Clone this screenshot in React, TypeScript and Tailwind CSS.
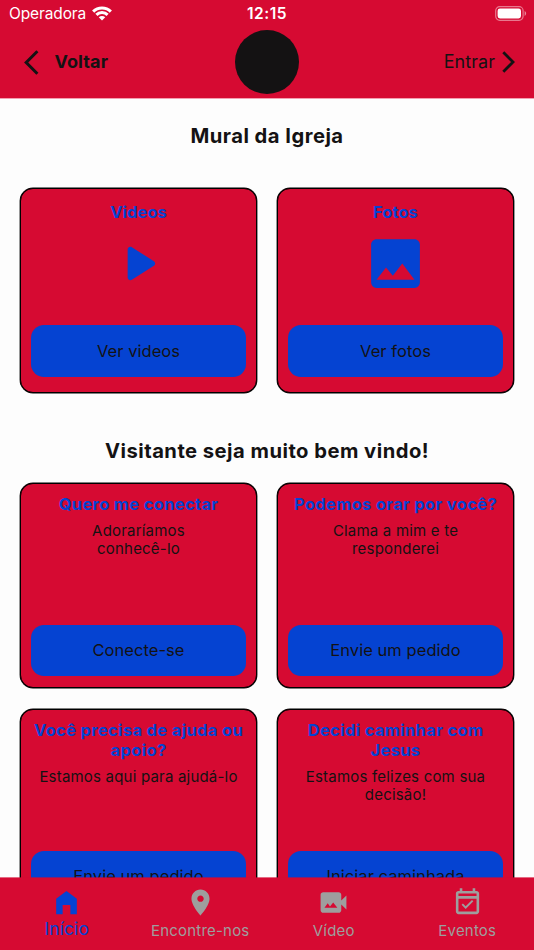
import clsx from "clsx"

interface IconProps {
  d: string
  className?: string
}

interface Card {
  title: string[]
  text?: string[]
  icon?: string
  action: string
}

interface Tab {
  label: string
  icon: string
  active?: boolean
}

const icons = {
  play: "M8 6.82v10.36c0 .79.87 1.27 1.54.84l8.14-5.18c.62-.39.62-1.29 0-1.69L9.54 5.98C8.87 5.55 8 6.03 8 6.82z",
  image:
    "M21 19V5c0-1.1-.9-2-2-2H5c-1.1 0-2 .9-2 2v14c0 1.1.9 2 2 2h14c1.1 0 2-.9 2-2zM8.5 13.5l2.5 3.01L14.5 12l4.5 6H5l3.5-4.5z",
  home: "M4 21V9l8-6 8 6v12h-5v-7H9v7z",
  place:
    "M12 2C8.13 2 5 5.13 5 9c0 5.25 7 13 7 13s7-7.75 7-13c0-3.87-3.13-7-7-7zm0 9.5c-1.38 0-2.5-1.12-2.5-2.5s1.12-2.5 2.5-2.5 2.5 1.12 2.5 2.5-1.12 2.5-2.5 2.5z",
  video:
    "M18 10.48V6c0-1.1-.9-2-2-2H4c-1.1 0-2 .9-2 2v12c0 1.1.9 2 2 2h12c1.1 0 2-.9 2-2v-4.48l4 3.98v-11l-4 3.98zM5 16l2.5-3.33 1.79 2.38L11.75 12l3.25 4H5z",
  event:
    "M16.53 11.06L15.47 10l-4.88 4.88-2.12-2.12-1.06 1.06L10.59 17l5.94-5.94zM19 3h-1V1h-2v2H8V1H6v2H5c-1.11 0-1.99.9-1.99 2L3 19c0 1.1.89 2 2 2h14c1.1 0 2-.9 2-2V5c0-1.1-.9-2-2-2zm0 16H5V9h14v10zM5 7V5h14v2H5z",
}

const mural: Card[] = [
  { title: ["Videos"], icon: icons.play, action: "Ver videos" },
  { title: ["Fotos"], icon: icons.image, action: "Ver fotos" },
]

const visitor: Card[] = [
  { title: ["Quero me conectar"], text: ["Adoraríamos", "conhecê-lo"], action: "Conecte-se" },
  { title: ["Podemos orar por você?"], text: ["Clama a mim e te", "responderei"], action: "Envie um pedido" },
  { title: ["Você precisa de ajuda ou", "apoio?"], text: ["Estamos aqui para ajudá-lo"], action: "Envie um pedido" },
  { title: ["Decidi caminhar com", "Jesus"], text: ["Estamos felizes com sua", "decisão!"], action: "Iniciar caminhada" },
]

const tabs: Tab[] = [
  { label: "Início", icon: icons.home, active: true },
  { label: "Encontre-nos", icon: icons.place },
  { label: "Vídeo", icon: icons.video },
  { label: "Eventos", icon: icons.event },
]

function Icon({ d, className }: IconProps) {
  return (
    <svg viewBox="0 0 24 24" fill="currentColor" className={className}>
      <path d={d} />
    </svg>
  )
}

function StatusBar() {
  return (
    <div className="grid h-7 grid-cols-3 items-center text-white">
      <div className="flex items-center gap-[6px] pl-[9px]">
        <span className="text-[15.5px] tracking-[-0.12px]">Operadora</span>
        <svg viewBox="0 0 20 15" className="mt-[-2px] h-[15px] w-5" fill="none" stroke="currentColor" strokeWidth="3.1">
          <path d="M1.16 5.66a12.5 12.5 0 0 1 17.68 0" />
          <path d="M4.4 8.9a7.9 7.9 0 0 1 11.2 0" />
          <path d="M10 14.5 6.75 11.25a4.6 4.6 0 0 1 6.5 0z" fill="currentColor" stroke="none" />
        </svg>
      </div>
      <span className="text-center text-[15.5px] font-semibold tracking-[0.5px]">12:15</span>
      <svg viewBox="0 0 32 15" className="mr-[7px] mt-[-2px] h-[15px] w-8 justify-self-end" fill="none">
        <rect x="0.7" y="0.7" width="27.4" height="13.6" rx="4" stroke="white" strokeOpacity="0.45" strokeWidth="1.2" />
        <rect x="2.6" y="2.6" width="23.4" height="9.8" rx="2.4" fill="white" />
        <path d="M29.6 5.1c2 .8 2 4 0 4.8z" fill="white" fillOpacity="0.5" />
      </svg>
    </div>
  )
}

function Header() {
  return (
    <header className="h-[99px] shrink-0 border-b border-[#f39fb0] bg-[#d60a32]">
      <StatusBar />
      <div className="grid h-[68px] grid-cols-3 items-center">
        <div className="flex items-center gap-[16px] pl-[23.5px]">
          <svg viewBox="0 0 15 25" className="h-[25px] w-[15px]" fill="none" stroke="currentColor" strokeWidth="3">
            <path d="M13.4 1.3 2.2 12.5l11.2 11.2" />
          </svg>
          <span className="text-[18px] font-bold leading-[26px] tracking-[0.1px]">Voltar</span>
        </div>
        <div className="size-[64.6px] justify-self-center rounded-full bg-[#141213]" />
        <div className="flex items-center justify-end gap-[7px] pr-[19px]">
          <span className="text-[18px] leading-[26px] tracking-[0.05px]">Entrar</span>
          <svg viewBox="0 0 13 22" className="h-[22px] w-[13px]" fill="none" stroke="currentColor" strokeWidth="2.8">
            <path d="m1.3 1.2 9.8 9.8-9.8 9.8" />
          </svg>
        </div>
      </div>
    </header>
  )
}

function InfoCard({ title, text, icon, action }: Card) {
  return (
    <div
      className={clsx(
        "flex h-[205px] flex-col items-center whitespace-nowrap rounded-[13px] border border-black bg-[#d60a32] px-[10px] text-center shadow-[0_0_0_0.4px_#000]",
        icon ? "pt-[13px] pb-[15px]" : "pt-[10px] pb-[11px]",
      )}
    >
      <h3
        className={clsx(
          "text-[16.5px] font-bold leading-[20.4px] text-[#0543d2]",
          icon ? "tracking-[0.05px]" : "tracking-[0.33px]",
        )}
      >
        {title.map((line) => (
          <div key={line}>{line}</div>
        ))}
      </h3>
      {text && (
        <p className="mt-[7.2px] text-[15px] leading-[18px] tracking-[0.2px]">
          {text.map((line) => (
            <span key={line} className="block">
              {line}
            </span>
          ))}
        </p>
      )}
      {icon && <Icon d={icon} className="mt-[8.6px] size-[65px] text-[#0543d2]" />}
      <button
        className={clsx(
          "mt-auto w-full shrink-0 rounded-[13px] bg-[#0543d2] text-[16.5px] tracking-[0.05px]",
          icon ? "h-[52px]" : "h-[51.4px]",
        )}
      >
        {action}
      </button>
    </div>
  )
}

function TabBar() {
  return (
    <nav className="grid h-[72px] shrink-0 grid-cols-4 bg-[#d60a32] shadow-[0_-0.6px_0_#d60a32]">
      {tabs.map(({ label, icon, active }) => (
        <div
          key={label}
          className={clsx("flex flex-col items-center pt-[9px]", active ? "text-[#0543d2]" : "text-[#9e9e9e]")}
        >
          <Icon d={icon} className="size-[31px]" />
          <span
            className={clsx(
              "whitespace-nowrap",
              active ? "text-[17.5px] leading-[22px] tracking-[0.1px]" : "text-[15px] leading-[26px] tracking-[0.2px]",
            )}
          >
            {label}
          </span>
        </div>
      ))}
    </nav>
  )
}

export default function App() {
  return (
    <div className="flex h-[950px] w-[534px] flex-col overflow-hidden bg-[#fdfdfd] font-['Inter',sans-serif] text-[#141213]">
      <Header />
      <main className="min-h-0 flex-1 overflow-hidden px-5">
        <h2 className="mt-[25px] text-center text-[20.2px] font-bold leading-6 tracking-[0.48px]">Mural da Igreja</h2>
        <div className="mt-10 grid grid-cols-2 gap-5">
          {mural.map((card) => (
            <InfoCard key={card.action} {...card} />
          ))}
        </div>
        <h2 className="mt-[46px] text-center text-[20.2px] font-bold leading-6 tracking-[0.48px]">
          Visitante seja muito bem vindo!
        </h2>
        <div className="mt-5 grid grid-cols-2 gap-x-5 gap-y-[21px]">
          {visitor.map((card) => (
            <InfoCard key={card.title[0]} {...card} />
          ))}
        </div>
      </main>
      <TabBar />
    </div>
  )
}
